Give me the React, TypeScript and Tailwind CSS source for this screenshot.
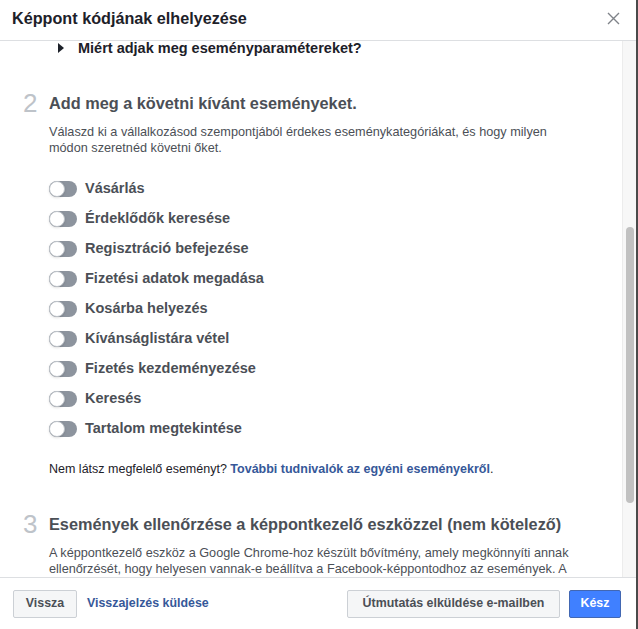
import React from 'react';

const events = [
  'Vásárlás',
  'Érdeklődők keresése',
  'Regisztráció befejezése',
  'Fizetési adatok megadása',
  'Kosárba helyezés',
  'Kívánságlistára vétel',
  'Fizetés kezdeményezése',
  'Keresés',
  'Tartalom megtekintése',
];

const Toggle: React.FC = () => (
  <div className="relative w-[28px] h-[16px] rounded-full bg-[#8d949e]">
    <div className="absolute left-0 top-0 w-[16px] h-[16px] rounded-full bg-white border border-[#bec3c9] shadow-sm" />
  </div>
);

const StepHeading: React.FC<{ num: string; title: string }> = ({ num, title }) => (
  <div className="flex items-center h-[24px]">
    <span className="w-[26px] text-[26px] leading-[24px] text-[#bec3c9] font-normal">{num}</span>
    <span className="text-[16.3px] leading-[20px] font-bold text-[#4b4f56]">{title}</span>
  </div>
);

export default function App() {
  return (
    <div className="w-[638px] h-[629px] bg-[#4a4a4a] overflow-hidden" style={{ fontFamily: '"Liberation Sans", Arial, sans-serif' }}>
      <div className="w-[636px] h-[629px] bg-white flex flex-col">
        {/* header */}
        <div className="h-[41px] shrink-0 border-b border-[#dddfe2] flex items-center justify-between pl-[12px] pr-[16px]">
          <span className="text-[16.2px] font-bold text-[#1d2129] -mt-[4px]">Képpont kódjának elhelyezése</span>
          <svg width="13" height="13" viewBox="0 0 13 13" className="-mt-[4px]">
            <path d="M1 1 L12 12 M12 1 L1 12" stroke="#7f8389" strokeWidth="1.4" />
          </svg>
        </div>

        {/* body */}
        <div className="flex flex-1 min-h-0">
          <div className="flex-1 overflow-hidden pl-[23px] pr-[12px]">
            <div className="flex items-center h-[14px] pl-[34px]">
              <svg width="8" height="10" viewBox="0 0 8 10" className="mr-[13px]">
                <path d="M1 0 L7 5 L1 10 Z" fill="#1d2129" />
              </svg>
              <span className="text-[14.5px] leading-[14px] font-bold text-[#1d2129]">Miért adjak meg eseményparamétereket?</span>
            </div>

            <div className="mt-[36px]">
              <StepHeading num="2" title="Add meg a követni kívánt eseményeket." />
              <p className="mt-[9px] ml-[26px] text-[12.7px] leading-[16px] text-[#4b4f56]">
                Válaszd ki a vállalkozásod szempontjából érdekes eseménykategóriákat, és hogy milyen
                <br />
                módon szeretnéd követni őket.
              </p>
              <div className="mt-[18px] ml-[26px] flex flex-col">
                {events.map((e) => (
                  <div key={e} className="h-[30px] flex items-center gap-[8px]">
                    <Toggle />
                    <span className="text-[14.5px] font-bold text-[#4b4f56]">{e}</span>
                  </div>
                ))}
              </div>
              <p className="mt-[17px] ml-[26px] text-[12.5px] leading-[16px] text-[#1d2129]">
                Nem látsz megfelelő eseményt?{' '}
                <span className="font-bold text-[#365899]">További tudnivalók az egyéni eseményekről</span>.
              </p>
            </div>

            <div className="mt-[35px]">
              <StepHeading num="3" title="Események ellenőrzése a képpontkezelő eszközzel (nem kötelező)" />
              <p className="mt-[9px] ml-[26px] text-[12.7px] leading-[16px] text-[#4b4f56]">
                A képpontkezelő eszköz a Google Chrome-hoz készült bővítmény, amely megkönnyíti annak
                <br />
                ellenőrzését, hogy helyesen vannak-e beállítva a Facebook-képpontodhoz az események. A
              </p>
            </div>
          </div>

          {/* scrollbar */}
          <div className="w-[14px] shrink-0 bg-[#f7f7f7] border-l border-[#ececec] pt-[186px] flex justify-center">
            <div className="w-[8px] h-[276px] rounded-full bg-[#c1c1c1]" />
          </div>
        </div>

        {/* footer */}
        <div className="h-[52px] shrink-0 border-t border-[#dddfe2] flex items-center justify-between pl-[13px] pr-[15px]">
          <div className="flex items-center gap-[10px]">
            <button className="h-[28px] w-[64px] rounded-[2px] border border-[#ccd0d5] bg-[#f5f6f7] text-[12.4px] font-bold text-[#4b4f56]">
              Vissza
            </button>
            <span className="text-[12.4px] font-bold text-[#365899]">Visszajelzés küldése</span>
          </div>
          <div className="flex items-center gap-[9px]">
            <button className="h-[28px] w-[213px] rounded-[2px] border border-[#ccd0d5] bg-[#f5f6f7] text-[12.4px] font-bold text-[#4b4f56]">
              Útmutatás elküldése e-mailben
            </button>
            <button className="h-[28px] w-[52px] rounded-[2px] border border-[#4267b2] bg-[#4080ff] text-[12.4px] font-bold text-white">
              Kész
            </button>
          </div>
        </div>
      </div>
    </div>
  );
}
